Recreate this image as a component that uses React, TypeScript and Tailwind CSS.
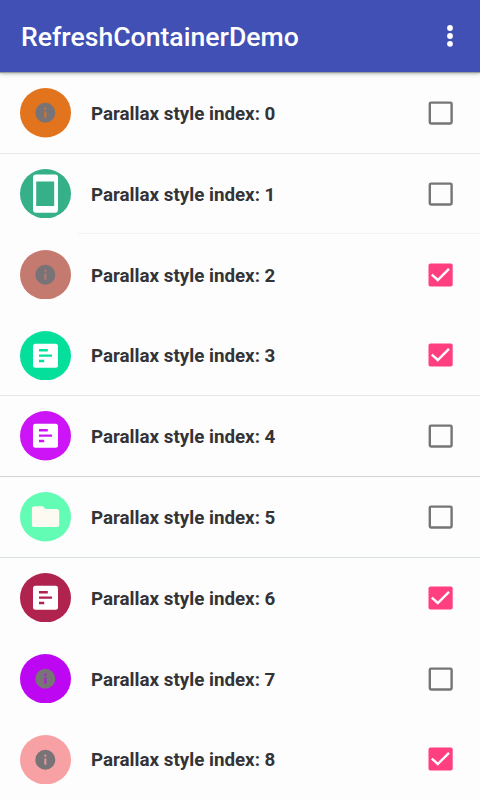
type Kind = 'info' | 'phone' | 'article' | 'folder';

interface Item {
  color: string;
  kind: Kind;
  checked: boolean;
  // Divider drawn above the row
  divider: string;
}

const items: Item[] = [
  { color: '#e2741d', kind: 'info', checked: false, divider: 'hidden' },
  { color: '#35b089', kind: 'phone', checked: false, divider: 'bg-[#e9e9ec]' },
  { color: '#c57a6f', kind: 'info', checked: true, divider: 'ml-[78px] -translate-y-px bg-[#f5f1f4]' },
  { color: '#05df9c', kind: 'article', checked: true, divider: 'hidden' },
  { color: '#cd14f6', kind: 'article', checked: false, divider: 'bg-[#e8e8ec]' },
  { color: '#62fcb5', kind: 'folder', checked: false, divider: 'bg-[#d2d4d4]' },
  { color: '#b0234f', kind: 'article', checked: true, divider: 'bg-[#d9e0e0]' },
  { color: '#bd06f2', kind: 'info', checked: false, divider: 'hidden' },
  { color: '#f8a1a4', kind: 'info', checked: true, divider: 'hidden' },
];

function Avatar({ color, kind }: { color: string; kind: Kind }) {
  return (
    <svg className="h-[49.4px] w-[51px] shrink-0" viewBox="0 0 51 49.4" preserveAspectRatio="none">
      <ellipse cx="25.5" cy="24.7" rx="25.5" ry="24.7" fill={color} />
      {kind === 'info' && (
        <>
          <circle cx="25.3" cy="24.7" r="10" fill="#777376" />
          <rect x="24.3" y="19.6" width="2.1" height="2.1" fill={color} opacity="0.8" />
          <rect x="24.3" y="23.5" width="2.1" height="6.3" fill={color} opacity="0.8" />
        </>
      )}
      {kind === 'phone' && (
        <path
          fillRule="evenodd"
          fill="#fff"
          d="M16 5.6h19a3 3 0 0 1 3 3v32.2a3 3 0 0 1-3 3H16a3 3 0 0 1-3-3V8.6a3 3 0 0 1 3-3zM16.2 12.5v24.6h18V12.5z"
        />
      )}
      {kind === 'article' && (
        <>
          <rect x="13" y="12.7" width="25" height="24" rx="2.5" fill="#fff" />
          <path fill={color} d="M19 18h8.800v2.400H19zM19 23.400h13v2.400H19zM19 28.800h5.200v2.400H19z" />
        </>
      )}
      {kind === 'folder' && (
        <path
          fill="#fdfaf2"
          d="M14.5 14.3h8.3l2.6 2.6h11.2a2.6 2.600 0 0 1 2.600 2.600v13a2.600 2.600 0 0 1-2.600 2.600H14.500a2.600 2.600 0 0 1-2.600-2.600V16.900a2.600 2.600 0 0 1 2.600-2.600z"
        />
      )}
    </svg>
  );
}

function Checkbox({ checked }: { checked: boolean }) {
  return (
    <svg className="h-[24px] w-[25px] shrink-0" viewBox="0 0 25 24">
      {checked ? (
        <>
          <rect x="0.5" y="0.4" width="24.2" height="23.2" rx="2" fill="#ff3f80" />
          <path d="M3.800 11.600L9.800 17L21 5.800" fill="none" stroke="#fff" strokeWidth="2.4" />
        </>
      ) : (
        <rect x="1.8" y="1.6" width="21.8" height="20.9" rx="1.2" fill="none" stroke="#777477" strokeWidth="2.4" />
      )}
    </svg>
  );
}

export default function App() {
  return (
    <div className="flex h-[800px] w-[480px] flex-col overflow-hidden bg-[#fdfdfd] font-['Roboto',sans-serif]">
      <header className="relative z-10 flex h-[72.2px] shrink-0 items-center justify-between bg-[#4150b5] pr-[27px] pl-[21px] shadow-[0_1px_1px_#9aa0a0,0_2px_4px_rgba(0,0,0,0.25)]">
        <h1 className="pt-[2px] text-[26.6px] leading-8 font-medium whitespace-nowrap text-white">RefreshContainerDemo</h1>
        <svg className="h-[22px] w-[6px]" viewBox="0 0 6 22" fill="#fff">
          <circle cx="3" cy="3" r="2.9" />
          <circle cx="3" cy="11" r="2.9" />
          <circle cx="3" cy="18.8" r="2.9" />
        </svg>
      </header>
      <main className="flex flex-col">
        {items.map((item, i) => (
          <div key={i} className="flex h-[80.8px] shrink-0 flex-col">
            <div className={`h-px shrink-0 ${item.divider}`} />
            <div className={`flex flex-1 items-center pt-[0.8px] pr-[27.5px] pl-[20px] ${item.divider === 'hidden' ? '' : '-mt-px'}`}>
              <Avatar color={item.color} kind={item.kind} />
              <span className="ml-5 flex-1 pt-[2px] text-[18.75px] leading-6 font-bold whitespace-nowrap text-[#343336]">
                Parallax style index: {i}
              </span>
              <Checkbox checked={item.checked} />
            </div>
          </div>
        ))}
      </main>
    </div>
  );
}
